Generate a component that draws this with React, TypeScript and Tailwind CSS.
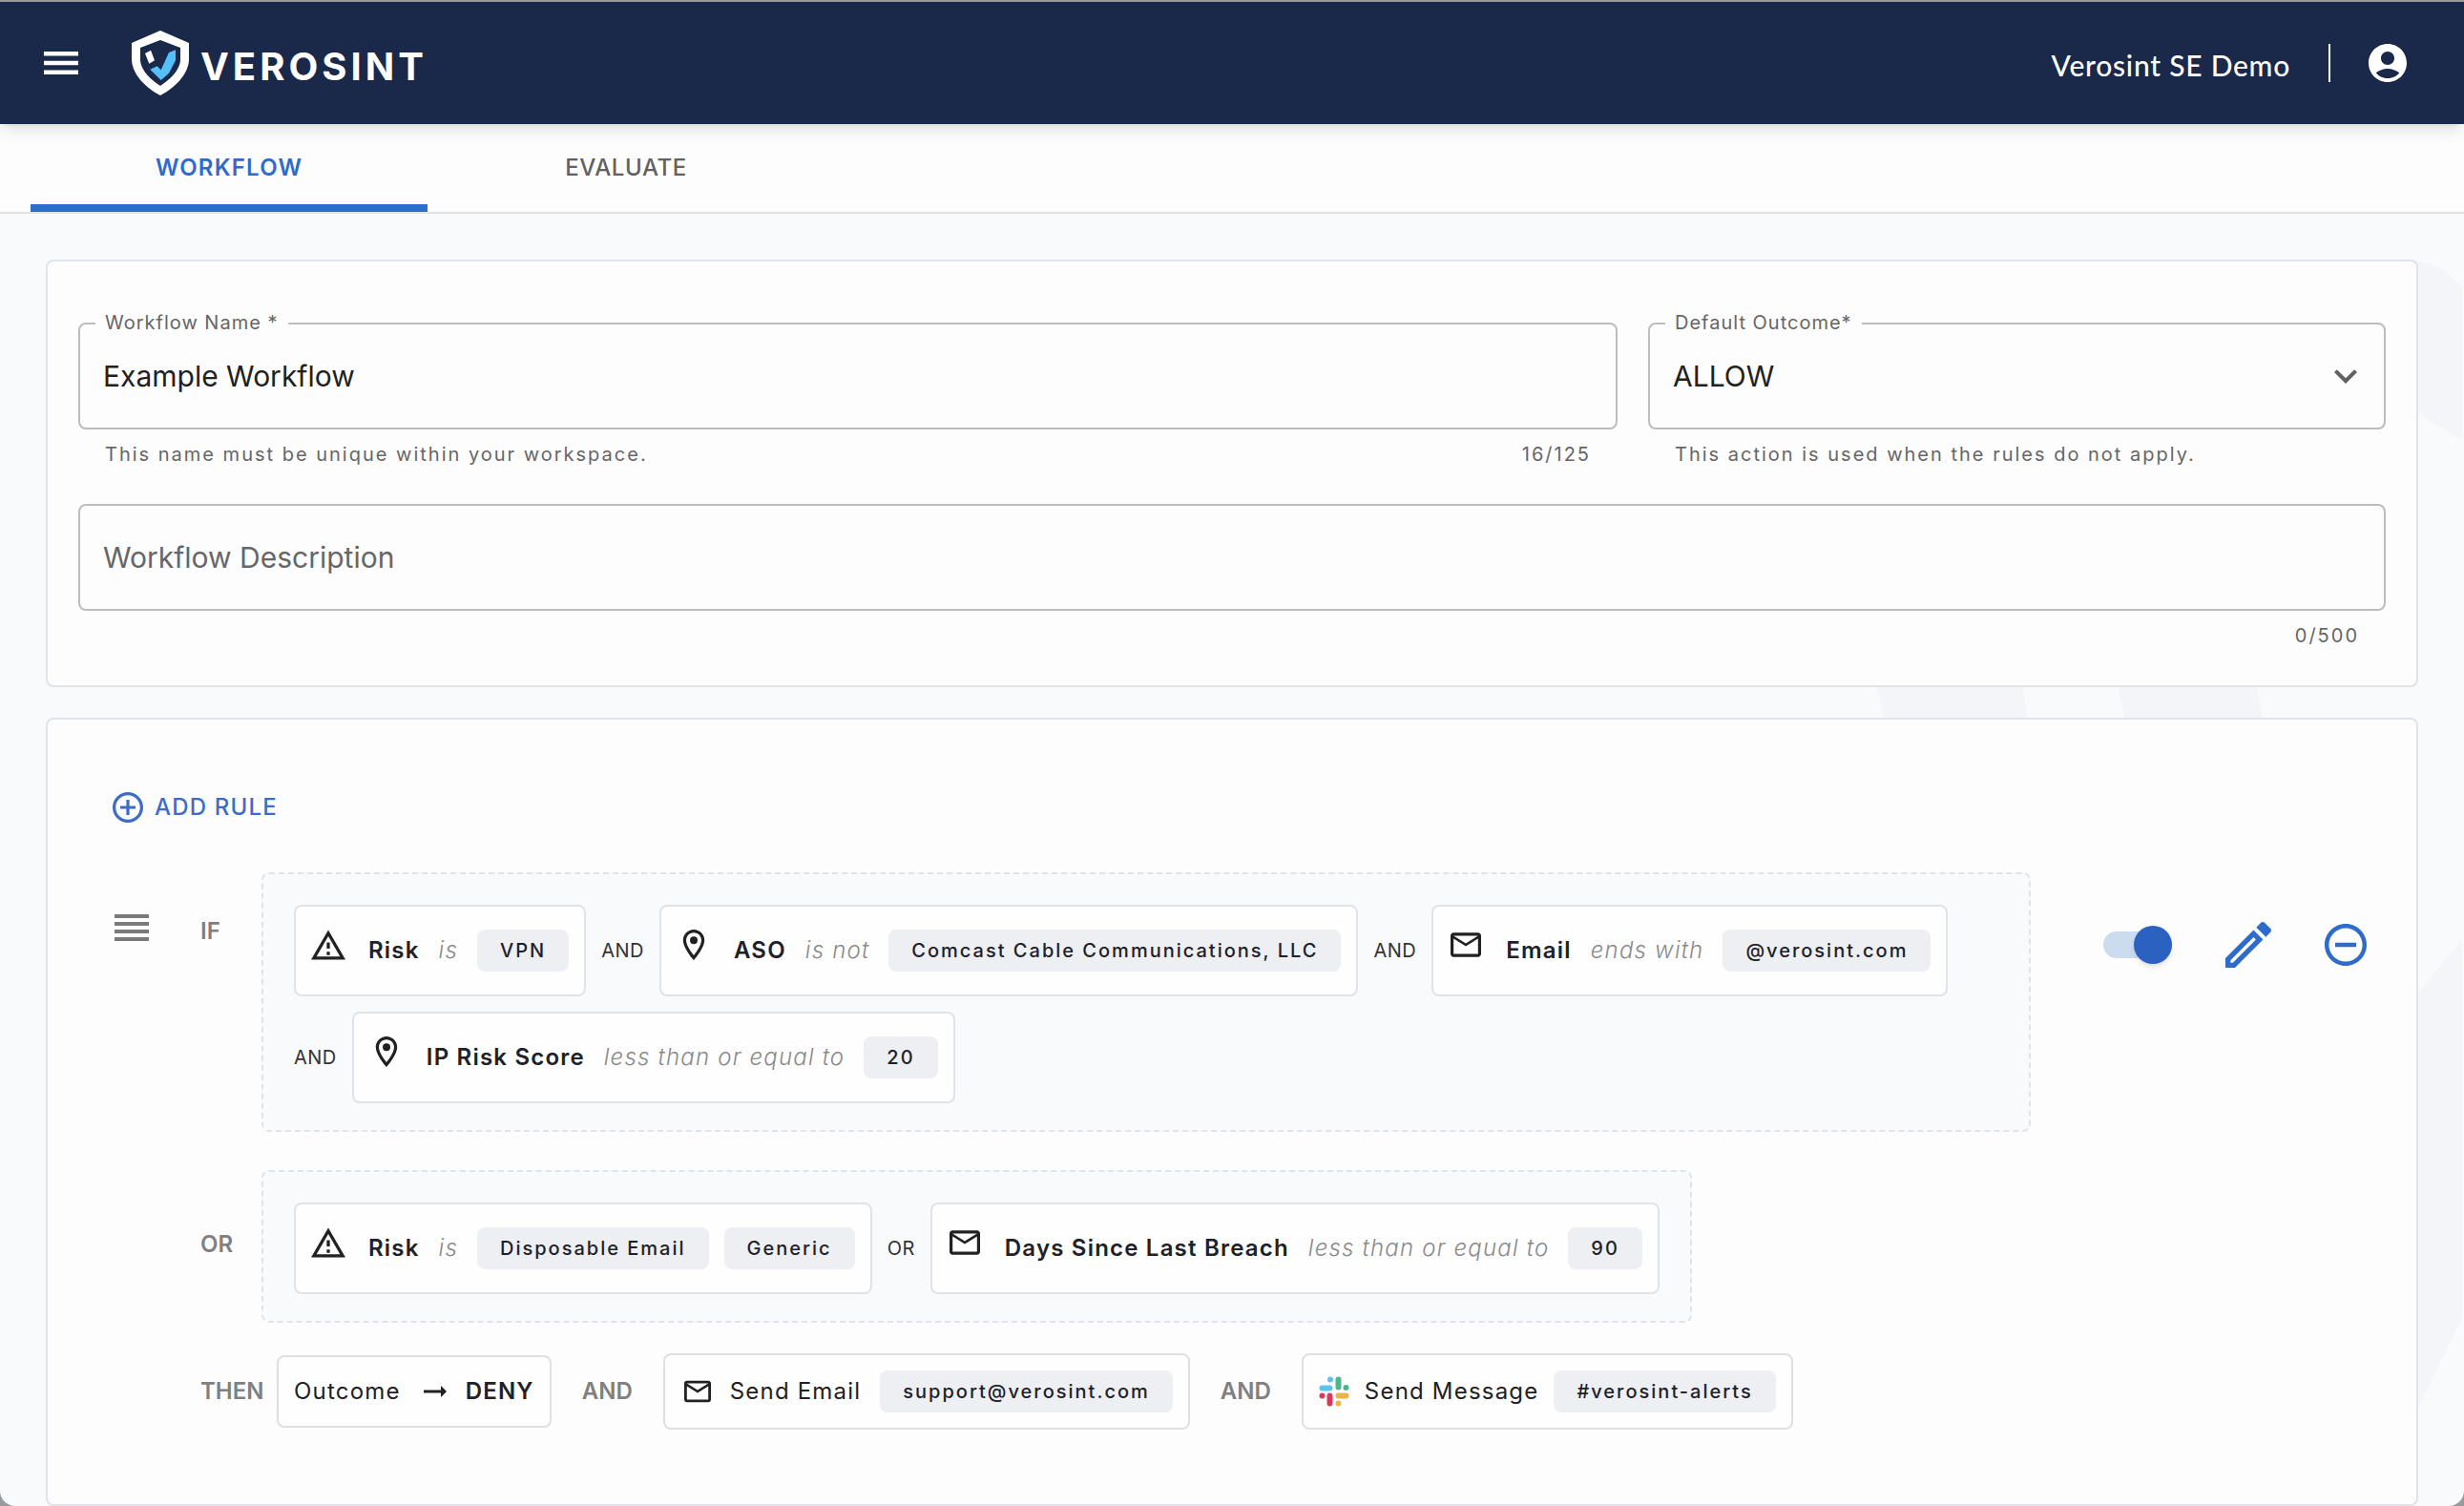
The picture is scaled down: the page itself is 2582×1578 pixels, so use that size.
import type { ReactNode } from "react";

function Warning() {
  return (
    <svg viewBox="1 2 22 19" className="h-8 w-9 fill-[#212121]">
      <path d="M12 5.99 19.53 19H4.47L12 5.99M12 2 1 21h22L12 2zm1 14h-2v2h2v-2zm0-6h-2v4h2v-4z" />
    </svg>
  );
}

function Pin() {
  return (
    <svg viewBox="5 2 14 20" className="h-8 w-6 fill-[#212121]">
      <path d="M12 2C8.13 2 5 5.13 5 9c0 5.25 7 13 7 13s7-7.75 7-13c0-3.87-3.13-7-7-7zM7 9c0-2.76 2.24-5 5-5s5 2.24 5 5c0 2.88-2.88 7.19-5 9.88C9.92 16.21 7 11.85 7 9z" />
      <circle cx="12" cy="9" r="2.5" />
    </svg>
  );
}

function Mail({ small }: { small?: boolean }) {
  return (
    <svg viewBox="2 4 20 16" className={small ? "h-6 w-7 fill-[#212121]" : "h-7 w-8 fill-[#212121]"}>
      <path d="M22 6c0-1.1-.9-2-2-2H4c-1.1 0-2 .9-2 2v12c0 1.1.9 2 2 2h16c1.1 0 2-.9 2-2V6zm-2 0-8 5-8-5h16zm0 12H4V8l8 5 8-5v10z" />
    </svg>
  );
}

function Slack() {
  return (
    <svg viewBox="0 0 32 32" className="h-8 w-8" fill="none" strokeWidth="6" strokeLinecap="round">
      <path d="M3.5 12.5h8M12 3.5v.1" stroke="#5cc3ef" />
      <path d="M20.5 3.5v8M28.5 12v.1" stroke="#4cb58b" />
      <path d="M20.5 20.5h8M20.5 28.5v.1" stroke="#e9b44c" />
      <path d="M11.5 20.5v8M3.5 20.5v.1" stroke="#d9395f" />
    </svg>
  );
}

function Logo() {
  return (
    <svg viewBox="0 0 60 68" className="h-17 w-15">
      <path
        fillRule="evenodd"
        fill="#fff"
        d="M30 0 60 13V30C60 46 44 61 30 68 16 61 0 46 0 30V13ZM30 10 9 18V30C9 42 21 52 30 58 39 52 51 42 51 30V18Z"
      />
      <path fill="#fff" d="M14 24 20 20.7 24 31.3 18.3 34.7Z" />
      <path fill="#54c0f7" d="M19.3 40.7 26.7 37.3 30.7 41.3 39 23 46 20.3V31.3L39 44.7 30.7 52Z" />
    </svg>
  );
}

function Pill({ children }: { children: ReactNode }) {
  return (
    <span className="flex h-11 items-center rounded-lg bg-[#eeeff3] px-6 text-xl font-medium tracking-widest whitespace-nowrap text-[#1d2129]">
      {children}
    </span>
  );
}

function Condition({
  icon,
  name,
  op,
  values,
}: {
  icon: ReactNode;
  name: string;
  op: string;
  values: string[];
}) {
  return (
    <div className="flex h-24 items-center rounded-lg border-2 border-[#dfe3ea] bg-[#fefefe] pr-4 pl-4">
      <div className="-mt-3 flex w-9 justify-center">{icon}</div>
      <span className="ml-6 text-2xl font-semibold tracking-wider whitespace-nowrap text-[#1d2129]">{name}</span>
      <span className="mx-5 text-2xl font-light tracking-wider whitespace-nowrap text-[#8a8a8a] italic">{op}</span>
      <div className="flex gap-4">
        {values.map((v) => (
          <Pill key={v}>{v}</Pill>
        ))}
      </div>
    </div>
  );
}

function Join({ children }: { children: ReactNode }) {
  return <span className="text-xl tracking-wide text-[#333]">{children}</span>;
}

function SideLabel({ children }: { children: ReactNode }) {
  return <span className="text-2xl leading-7 font-semibold text-[#808080]">{children}</span>;
}

function Field({ label, children, className }: { label?: string; children: ReactNode; className?: string }) {
  return (
    <div className={"relative flex h-28 items-center rounded-lg border-2 border-[#bdbdbd] px-6 " + (className ?? "")}>
      {label && (
        <span className="absolute -top-3.5 left-4 bg-[#fdfdfe] px-2.5 text-xl leading-6 tracking-wider text-[#666]">
          {label}
        </span>
      )}
      {children}
    </div>
  );
}

export default function App() {
  return (
    <div className="relative h-screen overflow-hidden bg-[#9a9a9a] pt-0.5 font-['Inter',sans-serif]">
      <div className="relative flex h-full flex-col overflow-hidden rounded-b-2xl bg-[#f9fafc]">
        <svg viewBox="0 0 2582 1578" className="absolute inset-0 h-full w-full">
          <path d="M2533 270 2560 280 2582 300V460L2533 430Z" fill="#f4f5f8" />
          <path d="M1967 716H2120L2126 753H1975Z" fill="#f4f5f8" />
          <path d="M2220 716H2366L2372 753H2228Z" fill="#f4f5f8" />
          <path d="M2533 1043 2582 983V1380L2533 1480Z" fill="#f4f5f8" />
        </svg>

        <header className="relative z-10 flex h-32 shrink-0 items-center bg-[#1a2849] pr-15 pl-11.5 shadow-lg">
          <svg viewBox="0 0 36 24" className="h-6 w-9 fill-white">
            <rect width="36" height="4.5" />
            <rect y="9.75" width="36" height="4.5" />
            <rect y="19.5" width="36" height="4.5" />
          </svg>
          <div className="ml-14 flex items-center gap-3">
            <Logo />
            <span className="mt-2 text-[40px] font-bold tracking-widest text-white">VEROSINT</span>
          </div>
          <div className="ml-auto flex items-center font-['Lato',sans-serif]">
            <span className="mt-1 text-3xl font-medium tracking-wide text-white">Verosint SE Demo</span>
            <div className="mx-10 h-10 w-0.5 bg-white" />
            <svg viewBox="2 2 20 20" className="h-10 w-10 fill-white">
              <path d="M12 2C6.48 2 2 6.48 2 12s4.48 10 10 10 10-4.48 10-10S17.52 2 12 2zm0 4c1.93 0 3.5 1.57 3.5 3.5S13.93 13 12 13s-3.5-1.57-3.5-3.5S10.07 6 12 6zm0 14c-2.03 0-4.43-.82-6.14-2.88C7.55 15.8 9.68 15 12 15s4.45.8 6.14 2.12C16.43 19.18 14.03 20 12 20z" />
            </svg>
          </div>
        </header>

        <nav className="relative flex h-23.5 shrink-0 border-b-2 border-[#dfe3e9] bg-[#fdfdfe] pl-8">
          <div className="flex w-104 items-center justify-center border-b-8 border-[#2f6bcb] pt-2 text-2xl font-semibold tracking-wider text-[#2f6bcb]">
            WORKFLOW
          </div>
          <div className="flex w-104 items-center justify-center text-2xl font-medium tracking-wide text-[#616161]">
            EVALUATE
          </div>
        </nav>

        <main className="relative flex min-h-0 flex-1 flex-col px-12 pt-12">
          <section className="rounded-lg border-2 border-[#e0e4ea] bg-[#fdfdfe] px-8 pt-16 pb-10">
            <div className="flex gap-8">
              <div className="flex-1">
                <Field label="Workflow Name *">
                  <span className="text-3xl text-[#212121]">Example Workflow</span>
                </Field>
                <div className="mt-3.5 flex justify-between px-7 text-xl leading-6 tracking-widest text-[#666]">
                  <span>This name must be unique within your workspace.</span>
                  <span>16/125</span>
                </div>
              </div>
              <div className="w-[773px]">
                <Field label="Default Outcome*" className="justify-between pr-7">
                  <span className="text-3xl text-[#212121]">ALLOW</span>
                  <svg viewBox="6 8 12 8" className="h-4 w-6 fill-[#616161]">
                    <path d="M16.59 8.59 12 13.17 7.41 8.59 6 10l6 6 6-6z" />
                  </svg>
                </Field>
                <div className="mt-3.5 px-7 text-xl leading-6 tracking-widest text-[#666]">
                  This action is used when the rules do not apply.
                </div>
              </div>
            </div>
            <Field className="mt-10">
              <span className="text-3xl text-[#666]">Workflow Description</span>
            </Field>
            <div className="mt-3.5 pr-7 text-right text-xl leading-6 tracking-widest text-[#666]">0/500</div>
          </section>

          <section className="mt-8 flex-1 rounded-lg border-2 border-[#e0e4ea] bg-[#fdfdfe] pt-17 pr-13 pl-16">
            <div className="ml-1 flex h-12 items-center gap-3 text-2xl font-medium tracking-wider text-[#3d6cc6]">
              <svg viewBox="2 2 20 20" className="h-8 w-8 fill-[#3d6cc6]">
                <path d="M13 7h-2v4H7v2h4v4h2v-4h4v-2h-4V7zm-1-5C6.48 2 2 6.48 2 12s4.48 10 10 10 10-4.48 10-10S17.52 2 12 2zm0 18c-4.41 0-8-3.59-8-8s3.59-8 8-8 8 3.59 8 8-3.59 8-8 8z" />
              </svg>
              ADD RULE
            </div>

            <div className="mt-11 flex items-start">
              <div className="w-24 pt-11 pl-1.5">
                <svg viewBox="0 0 36 28" className="h-7 w-9 fill-[#7a7a7a]">
                  <rect width="36" height="4" />
                  <rect y="8" width="36" height="4" />
                  <rect y="16" width="36" height="4" />
                  <rect y="24" width="36" height="4" />
                </svg>
              </div>
              <div className="w-16 pt-12">
                <SideLabel>IF</SideLabel>
              </div>
              <div className="flex flex-1 flex-col gap-4 rounded-lg border-2 border-dashed border-[#e0e4ea] bg-[#f9fafc] px-8 pt-8 pb-7">
                <div className="flex items-center gap-4">
                  <Condition icon={<Warning />} name="Risk" op="is" values={["VPN"]} />
                  <Join>AND</Join>
                  <Condition icon={<Pin />} name="ASO" op="is not" values={["Comcast Cable Communications, LLC"]} />
                  <Join>AND</Join>
                  <Condition icon={<Mail />} name="Email" op="ends with" values={["@verosint.com"]} />
                </div>
                <div className="flex items-center gap-4">
                  <Join>AND</Join>
                  <Condition icon={<Pin />} name="IP Risk Score" op="less than or equal to" values={["20"]} />
                </div>
              </div>
              <div className="mt-13 ml-19 flex items-center gap-14">
                <div className="relative h-7 w-18 rounded-full bg-[#ccdcef]">
                  <div className="absolute -top-1.5 right-0 h-10 w-10 rounded-full bg-[#2b62c1] shadow-md" />
                </div>
                <svg viewBox="3 3 18 18" className="h-12 w-12 fill-[#2f6bcb]">
                  <path d="M14.06 9.02l.92.92L5.92 19H5v-.92l9.06-9.06M17.66 3c-.25 0-.51.1-.7.29l-1.83 1.83 3.75 3.75 1.83-1.83c.39-.39.39-1.02 0-1.41l-2.34-2.34c-.2-.2-.45-.29-.71-.29zm-3.6 3.19L3 17.25V21h3.75L17.81 9.94l-3.75-3.75z" />
                </svg>
                <svg viewBox="2 2 20 20" className="h-11 w-11 fill-[#2f6bcb]">
                  <path d="M7 11v2h10v-2H7zm5-9C6.48 2 2 6.48 2 12s4.48 10 10 10 10-4.48 10-10S17.52 2 12 2zm0 18c-4.41 0-8-3.59-8-8s3.59-8 8-8 8 3.59 8 8-3.59 8-8 8z" />
                </svg>
              </div>
            </div>

            <div className="mt-10 flex items-start pl-24">
              <div className="w-16 pt-16">
                <SideLabel>OR</SideLabel>
              </div>
              <div className="flex items-center gap-4 rounded-lg border-2 border-dashed border-[#e0e4ea] bg-[#f9fafc] px-8 pt-8 pb-7">
                <Condition icon={<Warning />} name="Risk" op="is" values={["Disposable Email", "Generic"]} />
                <Join>OR</Join>
                <Condition icon={<Mail />} name="Days Since Last Breach" op="less than or equal to" values={["90"]} />
              </div>
            </div>

            <div className="mt-8 flex items-center pl-24">
              <div className="w-20">
                <SideLabel>THEN</SideLabel>
              </div>
              <div className="flex items-center rounded-lg border-2 border-[#e0e0e2] bg-[#fefefe] px-4 py-5 text-2xl leading-8 tracking-wider text-[#212121]">
                Outcome
                <svg viewBox="4 8 16 8" className="mr-5 ml-6 h-3 w-6 fill-[#212121]">
                  <path d="M16.01 11H4v2h12.01v3L20 12l-3.99-4z" />
                </svg>
                <span className="font-semibold">DENY</span>
              </div>
              <div className="mx-8">
                <SideLabel>AND</SideLabel>
              </div>
              <div className="flex items-center gap-5 rounded-lg border-2 border-[#e0e0e2] bg-[#fefefe] py-4 pr-4 pl-5 text-2xl tracking-wider text-[#212121]">
                <Mail small />
                Send Email
                <Pill>support@verosint.com</Pill>
              </div>
              <div className="mx-8">
                <SideLabel>AND</SideLabel>
              </div>
              <div className="flex items-center gap-4 rounded-lg border-2 border-[#e0e0e2] bg-[#fefefe] py-4 pr-4 pl-4 text-2xl tracking-wider text-[#212121]">
                <Slack />
                Send Message
                <Pill>#verosint-alerts</Pill>
              </div>
            </div>
          </section>
        </main>
      </div>
    </div>
  );
}
